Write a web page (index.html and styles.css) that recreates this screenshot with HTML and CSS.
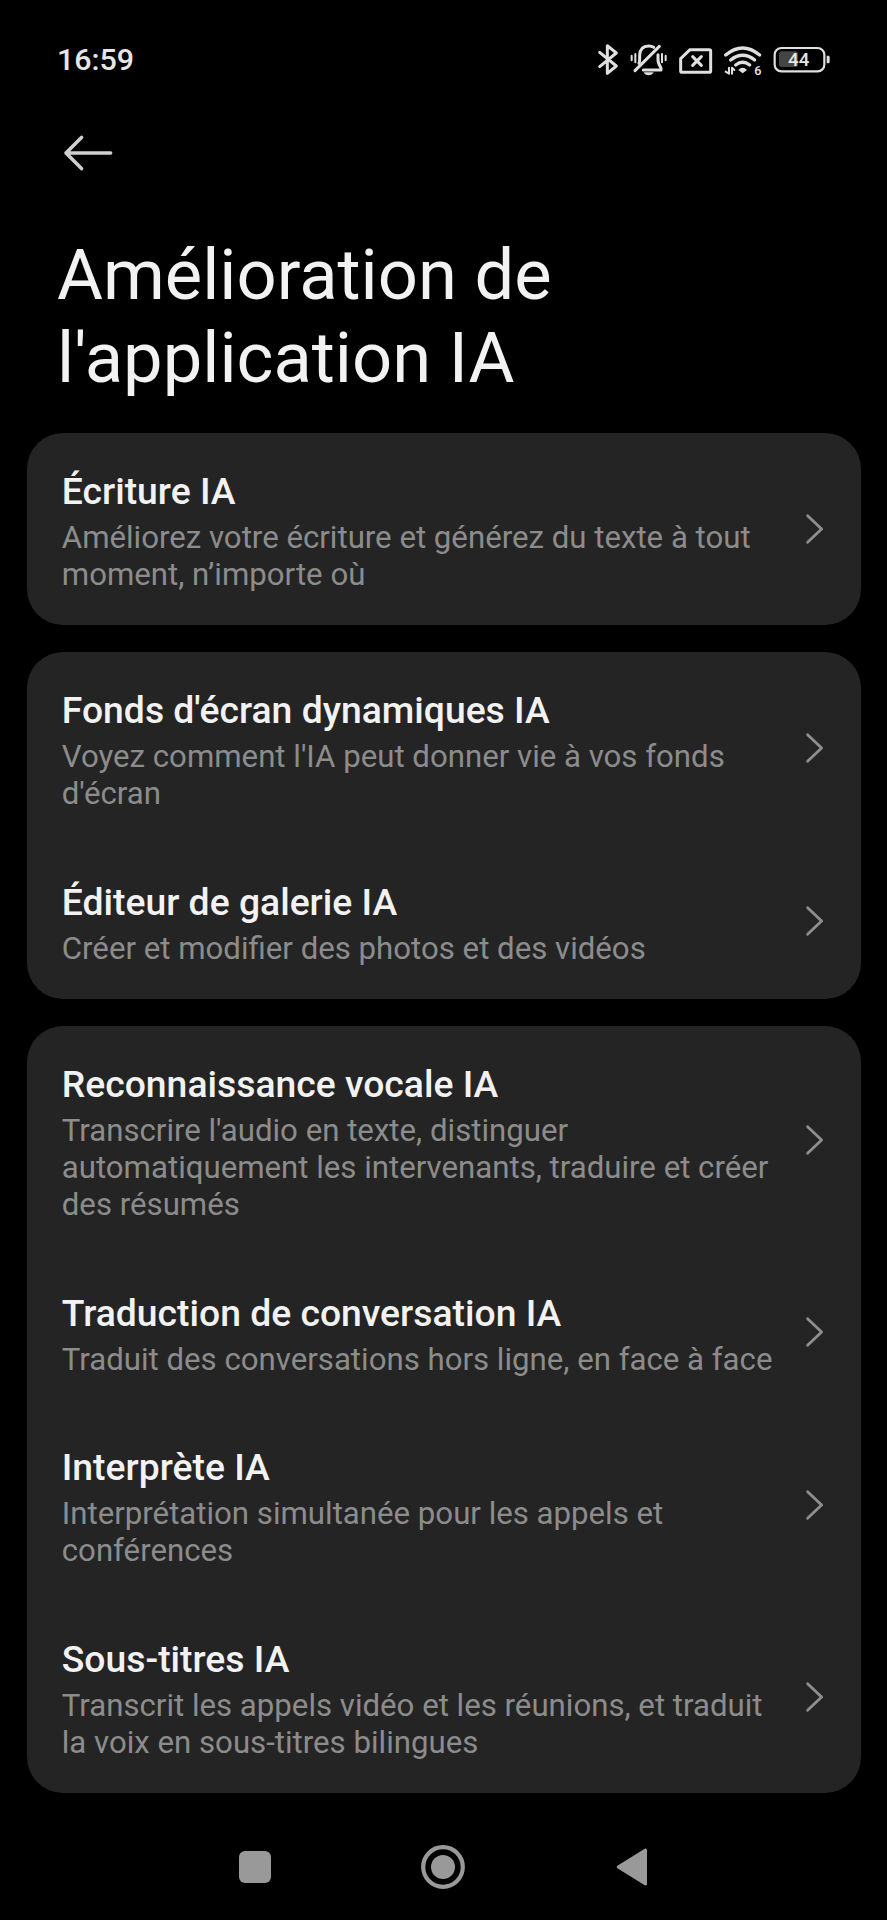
FILE: index.html
```html
<!DOCTYPE html>
<html lang="fr">
  <head>
    <meta charset="utf-8" />
    <meta name="viewport" content="width=device-width" />
    <title>Amélioration de l'application IA</title>
    <link rel="stylesheet" href="styles.css">
  </head>
  <body>
    <svg width="0" height="0" class="defs">
      <symbol id="chevron" viewBox="0 0 20 32">
        <path d="M2.6 2.8 L16.6 16 L2.6 29.2" />
      </symbol>
    </svg>

    <div class="status-bar">
      <span class="time">16:59</span>
      <div class="status-icons">
        <!-- bluetooth -->
        <svg width="20" height="32" viewBox="54 40 60 96">
          <path class="line" d="M59 65 L109 106 L82 128 V45 L109 67 L59 108" />
        </svg>
        <!-- vibrate, sound off -->
        <svg width="37" height="32" viewBox="150 40 111 96">
          <path class="line" d="M177 98 Q179 94 179 86 V74 Q180 46 206 46 Q215 46 221 50 M234 72 V88 Q234 98 243 112 V118 H190" />
          <path class="line" d="M165 120 L238 47" />
          <path class="fill" d="M191 125 H221 Q216 134 206 134 Q195 134 191 125 Z" />
          <path class="thin" d="M155 75 V89 M166 70 V95 M246 70 V95 M257 75 V89" />
        </svg>
        <!-- no sim -->
        <svg width="33" height="32" viewBox="297 40 99 96">
          <path class="line" d="M330 57 H388 Q392 57 392 61 V121 Q392 125 388 125 H306 Q302 125 302 121 V84 Z" />
          <path class="line" d="M338 78 L364 104 M364 78 L338 104" />
        </svg>
        <!-- wifi 6 -->
        <svg width="38" height="32" viewBox="432 40 114 96">
          <path class="arc" d="M437 73 Q488 31 539 73 M452 88 Q488 60 524 88 M467 103 Q488 87 509 103" />
          <path class="fill" d="M475 118 Q488 104 501 118 L488 128 Z" />
          <path class="thin" d="M447 129 V111 M447 129 L437 123 M456 111 V129 M456 111 L463 118" />
          <text x="523" y="132" class="wifi-gen">6</text>
        </svg>
        <!-- battery -->
        <svg width="56" height="32" viewBox="582 40 168 96">
          <rect class="level" x="597" y="62" width="57" height="47" rx="8" />
          <rect class="battery" x="584" y="52" width="149" height="70" rx="20" />
          <path class="fill" d="M740 75 H745 Q749 75 749 80 V93 Q749 98 745 98 H740 Z" />
          <text x="656" y="107" class="battery-text">44</text>
        </svg>
      </div>
    </div>

    <header>
      <svg class="back" width="52" height="36" viewBox="0 0 52 36">
        <path d="M19.5 2.4 L4 18 L19.5 33.6 M4 18 H48.6" />
      </svg>
      <h1>Amélioration de<br>l'application IA</h1>
    </header>

    <main>
      <section class="card">
        <div class="row">
          <div class="text">
            <h2>Écriture IA</h2>
            <p>Améliorez votre écriture et générez du texte à tout<br>moment, n’importe où</p>
          </div>
          <svg class="chevron"><use href="#chevron" /></svg>
        </div>
      </section>

      <section class="card">
        <div class="row">
          <div class="text">
            <h2>Fonds d'écran dynamiques IA</h2>
            <p>Voyez comment l'IA peut donner vie à vos fonds<br>d'écran</p>
          </div>
          <svg class="chevron"><use href="#chevron" /></svg>
        </div>
        <div class="row">
          <div class="text">
            <h2>Éditeur de galerie IA</h2>
            <p>Créer et modifier des photos et des vidéos</p>
          </div>
          <svg class="chevron"><use href="#chevron" /></svg>
        </div>
      </section>

      <section class="card">
        <div class="row">
          <div class="text">
            <h2>Reconnaissance vocale IA</h2>
            <p>Transcrire l'audio en texte, distinguer<br>automatiquement les intervenants, traduire et créer<br>des résumés</p>
          </div>
          <svg class="chevron"><use href="#chevron" /></svg>
        </div>
        <div class="row">
          <div class="text">
            <h2>Traduction de conversation IA</h2>
            <p>Traduit des conversations hors ligne, en face à face</p>
          </div>
          <svg class="chevron"><use href="#chevron" /></svg>
        </div>
        <div class="row">
          <div class="text">
            <h2>Interprète IA</h2>
            <p>Interprétation simultanée pour les appels et<br>conférences</p>
          </div>
          <svg class="chevron"><use href="#chevron" /></svg>
        </div>
        <div class="row">
          <div class="text">
            <h2>Sous-titres IA</h2>
            <p>Transcrit les appels vidéo et les réunions, et traduit<br>la voix en sous-titres bilingues</p>
          </div>
          <svg class="chevron"><use href="#chevron" /></svg>
        </div>
      </section>
    </main>

    <nav class="nav-bar">
      <svg width="44" height="44" viewBox="0 0 44 44">
        <rect x="6" y="6" width="32" height="32" rx="6" />
      </svg>
      <svg width="44" height="44" viewBox="0 0 44 44">
        <circle class="ring" cx="22" cy="22" r="19.8" />
        <circle cx="22" cy="22" r="12" />
      </svg>
      <svg width="44" height="44" viewBox="0 0 44 44">
        <path class="triangle" d="M8.2 22 L35.5 5 V39 Z" />
      </svg>
    </nav>
  </body>
</html>
```
FILE: styles.css
```css
* {
  box-sizing: border-box;
}

body {
  margin: 0;
  height: 1920px;
  display: flex;
  flex-direction: column;
  background: #000;
  color: #f2f2f2;
  font-family: Roboto, sans-serif;
  overflow: hidden;
}

h1,
h2,
p {
  margin: 0;
}

svg {
  display: block;
  flex: none;
  overflow: visible;
}

.defs {
  position: absolute;
}

.status-bar {
  display: flex;
  justify-content: space-between;
  align-items: center;
  height: 119px;
  padding: 0 57px 0 57px;
}

.time {
  padding-top: 1px;
  font-size: 30.4px;
  font-weight: 500;
  line-height: 36px;
  color: #e6e6e6;
}

.status-icons {
  display: flex;
  gap: 12px;
}

.status-icons path,
.status-icons rect {
  fill: none;
  stroke: #e0e0e0;
  stroke-linecap: round;
  stroke-linejoin: round;
}

.status-icons .line {
  stroke-width: 9;
}

.status-icons .thin {
  stroke-width: 6;
}

.status-icons .arc {
  stroke-width: 10;
}

.status-icons .fill {
  fill: #e0e0e0;
  stroke: none;
}

.status-icons .battery {
  stroke-width: 6.5;
}

.status-icons .level {
  fill: #444;
  stroke: none;
}

.status-icons text {
  fill: #e6e6e6;
  font-weight: 500;
}

.wifi-gen {
  font-size: 38px;
}

.battery-text {
  font-size: 56px;
  text-anchor: middle;
}

header {
  height: 314px;
  padding: 16px 57px 0;
}

.back {
  margin-left: 5px;
  fill: none;
  stroke: #cfcfcf;
  stroke-width: 3.6;
  stroke-linecap: round;
  stroke-linejoin: round;
}

h1 {
  margin-top: 63px;
  font-size: 70.5px;
  font-weight: 400;
  line-height: 83.3px;
}

main {
  display: flex;
  flex-direction: column;
  gap: 27.4px;
  padding: 0 26.4px 0 26.6px;
}

.card {
  border-radius: 36px;
  background: #242424;
}

.row {
  display: flex;
  justify-content: space-between;
  align-items: center;
  padding: 37px 35.6px 31.2px 35.2px;
}

.text {
  white-space: nowrap;
}

h2 {
  margin-bottom: 7px;
  font-size: 37.3px;
  font-weight: 500;
  line-height: 43px;
}

p {
  color: #8c8c8c;
  font-size: 31.2px;
  line-height: 36.75px;
}

.chevron {
  width: 20px;
  height: 32px;
  margin-top: -6px;
  fill: none;
  stroke: #8f8f8f;
  stroke-width: 2.8;
  stroke-linecap: round;
  stroke-linejoin: round;
}

.nav-bar {
  display: grid;
  grid-template-columns: repeat(3, 188.3px);
  justify-content: center;
  justify-items: center;
  margin-top: auto;
  padding-bottom: 31px;
  fill: #999;
}

.ring {
  fill: none;
  stroke: #999;
  stroke-width: 4.2;
}

.triangle {
  stroke: #999;
  stroke-width: 3;
  stroke-linejoin: round;
}
```
